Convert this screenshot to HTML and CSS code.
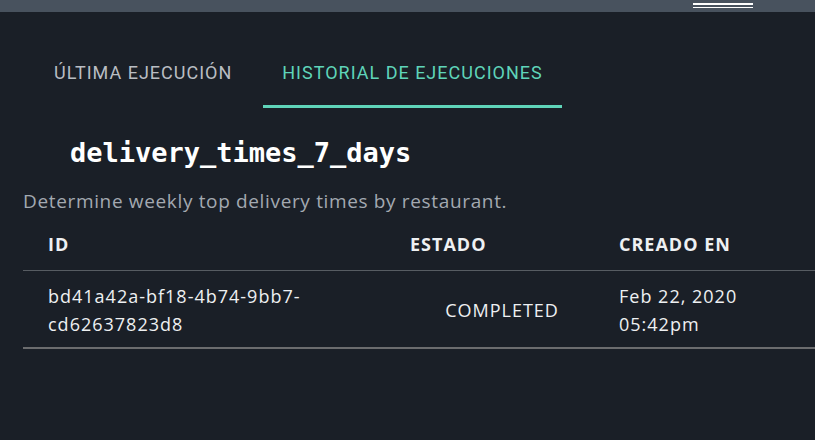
FILE: index.html
```html
<!DOCTYPE html>
<html lang="es">
<head>
<meta charset="utf-8">
<title>delivery_times_7_days</title>
<link rel="stylesheet" href="styles.css">
</head>
<body>
<header class="topbar">
  <div class="menu-lines"><span class="line thick"></span><span class="line"></span></div>
</header>
<main class="page">
  <nav class="tabs">
    <div class="tab">ÚLTIMA EJECUCIÓN</div>
    <div class="tab active">HISTORIAL DE EJECUCIONES</div>
  </nav>
  <h1 class="title">delivery_times_7_days</h1>
  <p class="desc">Determine weekly top delivery times by restaurant.</p>
  <div class="table">
    <div class="row head">
      <div class="cell">ID</div>
      <div class="cell">ESTADO</div>
      <div class="cell">CREADO EN</div>
    </div>
    <div class="row body">
      <div class="cell">bd41a42a-bf18-4b74-9bb7-<br>cd62637823d8</div>
      <div class="cell center">COMPLETED</div>
      <div class="cell">Feb 22, 2020<br>05:42pm</div>
    </div>
  </div>
</main>
</body>
</html>
```
FILE: styles.css
```css
html, body {
  margin: 0;
  padding: 0;
}
body {
  background: #1a1f27;
  color: #eef0f2;
  font-family: "Open Sans", sans-serif;
  height: 440px;
  overflow: hidden;
}
.topbar {
  height: 12px;
  background: #48525e;
  display: flex;
  justify-content: flex-end;
  padding-right: 62px;
}
.menu-lines {
  width: 60px;
  padding-top: 3px;
  display: flex;
  flex-direction: column;
  gap: 2px;
}
.line {
  display: block;
  height: 1px;
  background: #ffffff;
}
.line.thick {
  height: 2px;
}
.page {
  padding-left: 23px;
}
.tabs {
  display: flex;
  gap: 12px;
  margin: 24px 0 0 12px;
}
.tab {
  height: 72px;
  box-sizing: border-box;
  padding: 0 19px;
  display: flex;
  align-items: center;
  font-family: Roboto, sans-serif;
  font-size: 18px;
  letter-spacing: 1px;
  color: #b9bdc3;
  border-bottom: 3px solid transparent;
  padding-top: 3px;
}
.tab.active {
  color: #5fd4b9;
  border-bottom-color: #5fd4b9;
}
.title {
  margin: 0;
  padding: 27px 0 0 47px;
  font-family: "DejaVu Sans Mono", monospace;
  font-weight: bold;
  font-size: 27px;
  line-height: 36px;
  color: #ffffff;
}
.desc {
  margin: 0;
  padding-top: 17px;
  font-size: 19px;
  line-height: 26px;
  letter-spacing: 0.65px;
  color: #a3a9b1;
}
.table {
  margin-top: 18px;
}
.row {
  display: grid;
  grid-template-columns: 362px 209px 1fr;
}
.row.head {
  border-bottom: 1px solid #575c62;
  height: 38px;
}
.row.head .cell {
  font-weight: bold;
  font-size: 18px;
  letter-spacing: 1px;
  line-height: 24px;
}
.row.body {
  border-bottom: 2px solid #6b6c6e;
  padding: 11px 0 9px;
}
.cell {
  padding-left: 25px;
  font-size: 18px;
  line-height: 28px;
  letter-spacing: 1px;
}
.cell.center {
  display: flex;
  align-items: center;
  justify-content: center;
  padding-left: 25px;
}
```
